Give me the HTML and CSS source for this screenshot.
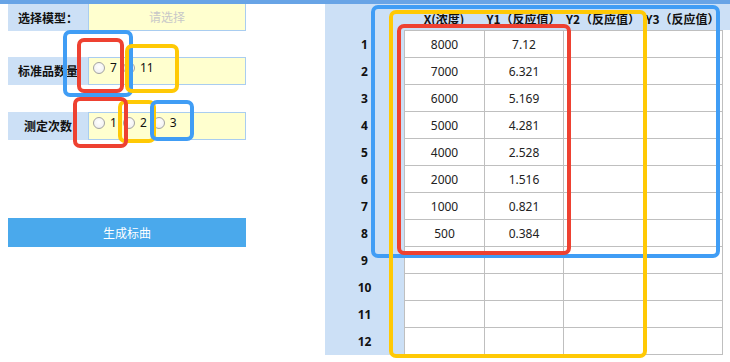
FILE: index.html
```html
<!DOCTYPE html>
<html lang="zh-CN">
<head>
	<meta charset="UTF-8">
	<title>标准曲线</title>
<link rel="stylesheet" href="styles.css">
</head>
<body>
<div class="topbar"></div>

<div class="page">
	<div class="form">
		<div class="row row_model">
			<div class="label">选择模型：</div>
			<div class="field placeholder">请选择</div>
		</div>
		<div class="row row_std">
			<div class="label">标准品数量</div>
			<div class="field radios">
				<label class="opt"><input type="radio" name="std"><span>7</span></label>
				<label class="opt"><input type="radio" name="std"><span>11</span></label>
			</div>
		</div>
		<div class="row row_times">
			<div class="label">测定次数</div>
			<div class="field radios">
				<label class="opt"><input type="radio" name="times"><span>1</span></label>
				<label class="opt"><input type="radio" name="times"><span>2</span></label>
				<label class="opt"><input type="radio" name="times"><span>3</span></label>
			</div>
		</div>
		<button class="btn_make">生成标曲</button>
	</div>

	<div class="sheet">
		<div class="sheet_head">
			<div class="corner"></div>
			<div class="hcell">X(浓度)</div>
			<div class="hcell">Y1（反应值）</div>
			<div class="hcell">Y2（反应值）</div>
			<div class="hcell">Y3（反应值）</div>
		</div>
		<div class="sheet_body">
			<div class="row_nums">
				<div>1</div><div>2</div><div>3</div><div>4</div>
				<div>5</div><div>6</div><div>7</div><div>8</div>
				<div>9</div><div>10</div><div>11</div><div>12</div>
			</div>
			<div class="grid">
				<div>8000</div><div>7.12</div><div></div><div></div>
				<div>7000</div><div>6.321</div><div></div><div></div>
				<div>6000</div><div>5.169</div><div></div><div></div>
				<div>5000</div><div>4.281</div><div></div><div></div>
				<div>4000</div><div>2.528</div><div></div><div></div>
				<div>2000</div><div>1.516</div><div></div><div></div>
				<div>1000</div><div>0.821</div><div></div><div></div>
				<div>500</div><div>0.384</div><div></div><div></div>
				<div></div><div></div><div></div><div></div>
				<div></div><div></div><div></div><div></div>
				<div></div><div></div><div></div><div></div>
				<div></div><div></div><div></div><div></div>
			</div>
		</div>
	</div>
</div>

<!-- segni di evidenziazione sopra lo screenshot -->
<div class="marks">
	<div class="mark blue" style="left:371px;top:5px;width:349px;height:253px"></div>
	<div class="mark yellow" style="left:389px;top:10px;width:258px;height:348px"></div>
	<div class="mark red" style="left:397px;top:24px;width:174px;height:231px"></div>

	<div class="mark blue" style="left:63px;top:30px;width:70px;height:67px"></div>
	<div class="mark red" style="left:77px;top:38px;width:47px;height:55px"></div>
	<div class="mark yellow" style="left:125px;top:44px;width:54px;height:49px"></div>

	<div class="mark yellow" style="left:118px;top:100px;width:38px;height:43px"></div>
	<div class="mark red" style="left:73px;top:97px;width:55px;height:51px"></div>
	<div class="mark blue" style="left:150px;top:100px;width:44px;height:41px"></div>
</div>
</body>
</html>
```

FILE: styles.css
```css
:root {
	--strip: #68a4e6;
	--pale: #cce0f6;
	--field: #ffffcf;
	--field_border: #a9cdf0;
	--btn: #4aa9ec;
	--line: #bfbfbf;
}

* {box-sizing: border-box;}

body {
	margin: 0;
	font-family: "Noto Sans", "Noto Sans CJK SC", sans-serif;
	font-size: 12px;
	color: #111;
	background: #fff;
}

.topbar {height: 4px; background: var(--strip);}

.page {display: flex; align-items: flex-start;}

/* colonna sinistra */
.form {width: 238px; margin-left: 8px; display: flex; flex-direction: column;}

.row {display: flex; height: 28px;}
.row_model {height: 27px;}
.row_std {margin-top: 26px;}
.row_times {margin-top: 27px;}

.label {
	width: 80px;
	background: var(--pale);
	font-family: "Noto Sans CJK SC", sans-serif;
	font-weight: bold;
	display: flex; align-items: center; justify-content: center;
	line-height: 14px;
}

.field {
	flex: 1;
	background: var(--field);
	border: solid 1px var(--field_border);
}
.row_model .field {border-top: none;}

.placeholder {
	display: flex; align-items: center; justify-content: center;
	font-family: "Noto Sans CJK SC", sans-serif;
	color: #c8c8c8;
	line-height: 14px;
}

.radios {display: flex; align-items: flex-start; padding: 3px 0 0 4px; gap: 6px;}

.opt {display: flex; align-items: center; height: 13px; line-height: 13px;}

.opt input {
	appearance: none;
	-webkit-appearance: none;
	width: 12px; height: 12px;
	margin: 0 5px 0 0;
	border: solid 1px #a3a3a3;
	border-radius: 50%;
	background: radial-gradient(circle at 50% 40%, #fff 0%, #f4f4f4 60%, #e2e2e2 100%);
}

.btn_make {
	margin-top: 78px;
	height: 29px;
	border: none;
	background: var(--btn);
	color: #fff;
	font-family: "Noto Sans CJK SC", sans-serif;
	font-size: 12px;
	padding: 0;
}

/* tabella */
.sheet {width: 405px; margin-left: 79px;}

.sheet_head {display: flex; height: 26px; background: var(--pale);}
.corner {width: 79px;}
.hcell {
	width: 80px;
	padding-top: 3px;
	display: flex; align-items: center; justify-content: center;
	font-family: "Noto Sans CJK SC", sans-serif;
	font-weight: bold;
	white-space: nowrap;
	line-height: 14px;
}
.hcell:nth-child(3), .hcell:nth-child(5) {width: 79px;}

.sheet_body {display: flex; align-items: flex-start;}

.row_nums {width: 79px; background: var(--pale); padding-top: 1px;}
.row_nums div {
	height: 27px;
	display: flex; align-items: center; justify-content: center;
	font-weight: bold;
	font-size: 12px;
}

.grid {
	display: grid;
	grid-template-columns: 80px 79px 80px 79px;
	grid-auto-rows: 27px;
	border-left: solid 1px var(--line);
	border-top: solid 1px var(--line);
}
.grid div {
	border-right: solid 1px var(--line);
	border-bottom: solid 1px var(--line);
	display: flex; align-items: center; justify-content: center;
	color: #222;
}

/* riquadri colorati */
.marks {position: absolute; left: 0; top: 0;}
.mark {position: absolute; border: solid 4px; border-radius: 7px;}
.blue {border-color: #409df5;}
.yellow {border-color: #ffc905;}
.red {border-color: #ee4131;}
```
